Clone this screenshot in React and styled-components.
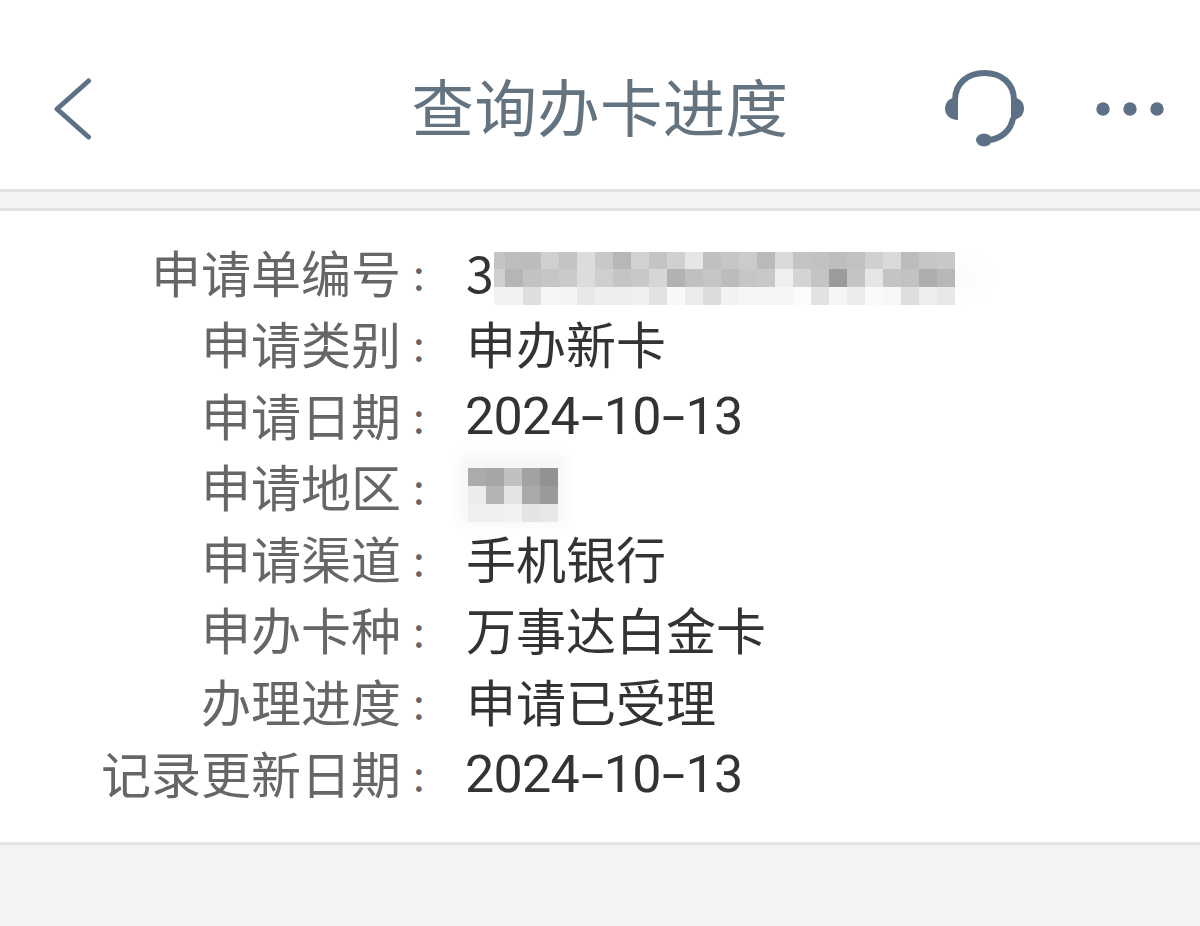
import React from 'react';
import styled, { createGlobalStyle } from 'styled-components';

const GlobalStyle = createGlobalStyle`
  html, body {
    margin: 0;
    padding: 0;
    background: #f3f3f3;
  }
`;

const Page = styled.div`
  width: 1200px;
  height: 926px;
  overflow: hidden;
  background: #f3f3f3;
  font-family: "Noto Sans CJK SC", "Noto Sans", sans-serif;
`;

const Header = styled.header`
  box-sizing: border-box;
  height: 192px;
  padding: 29px 36px 0;
  background: #fff;
  border-bottom: 3px solid #e4e4e4;
  display: grid;
  grid-template-columns: 1fr auto 1fr;
  align-items: center;
`;

const Title = styled.h1`
  margin: 0;
  padding-bottom: 7px;
  font-size: 62.5px;
  font-weight: 400;
  letter-spacing: 0.3px;
  line-height: 1;
  color: #63737f;
`;

const LeftSlot = styled.div`
  display: flex;
  align-items: center;
  padding-left: 18px;
`;

const RightSlot = styled.div`
  display: flex;
  align-items: center;
  justify-content: flex-end;
  gap: 71px;
`;

const Panel = styled.section`
  box-sizing: border-box;
  height: 637px;
  margin-top: 16px;
  padding-top: 24.5px;
  background: #fff;
  border-top: 3px solid #e4e4e4;
  border-bottom: 3px solid #e4e4e4;
`;

const Row = styled.div`
  display: grid;
  grid-template-columns: 401px 65px 1fr;
  grid-template-rows: 71.6px;
  align-items: center;
  font-size: 50px;
  line-height: 71.6px;
`;

const Label = styled.div`
  text-align: right;
  color: #666;
  white-space: nowrap;
`;

const Colon = styled.div`
  padding-left: 12px;
  font-size: 42px;
  color: #666;
`;

const Value = styled.div`
  display: flex;
  align-items: center;
  color: #333;
  white-space: nowrap;
`;

const DateText = styled.span`
  margin: 6px 0 0 -1px;
  font-family: Roboto, "Noto Sans", sans-serif;
  font-size: 52px;
  line-height: 60px;
  letter-spacing: -0.7px;
`;

const Dash = styled.span`
  display: inline-block;
  margin: 0 5.5px;
  transform: scaleX(1.6);
`;

const Mosaic = styled.div`
  display: grid;
  grid-template-columns: ${props => props.$columns};
  grid-auto-rows: ${props => props.$h}px;
  margin: ${props => props.$top}px 0 0 ${props => props.$left}px;
  box-shadow: ${props => props.$halo};
`;

const Cell = styled.div`
  background: ${props => props.$c};
`;

const numberCells = [
  '#c4c4c4', '#bdbdbd', '#bcbcbc', '#cfcfcf', '#c3c3c3', '#dcdcdc', '#c8c8c8', '#b7b7b7', '#d2d2d2', '#c4c4c4', '#d0d0d0', '#e6e6e6', '#c0c0c0', '#c6c6c6', '#cbcbcb', '#b9b9b9', '#dadada', '#c4c4c4', '#c2c2c2', '#bebebe', '#c2c2c2', '#d0d0d0', '#dadada', '#bcbcbc', '#c6c6c6', '#c8c8c8',
  '#cfcfcf', '#b5b5b5', '#c2c2c2', '#c6c6c6', '#cacaca', '#dcdcdc', '#cfcfcf', '#c4c4c4', '#c8c8c8', '#d6d6d6', '#b2b2b2', '#c0c0c0', '#c6c6c6', '#bcbcbc', '#c6c6c6', '#c8c8c8', '#f0f0f0', '#d4d4d4', '#c4c4c4', '#9b9b9b', '#c4c4c4', '#e6e6e6', '#c4c4c4', '#c2c2c2', '#adadad', '#b8b8b8',
  '#f2f2f2', '#f2f2f2', '#dedede', '#f6f6f6', '#f4f4f4', '#e8e8e8', '#eeeeee', '#eeeeee', '#f0f0f0', '#e2e2e2', '#f8f8f8', '#ececec', '#dcdcdc', '#f2f2f2', '#f6f6f6', '#f6f6f6', '#f6f6f6', '#fbfbfb', '#e2e2e2', '#f6f6f6', '#ececec', '#fafafa', '#f8f8f8', '#dedede', '#eeeeee', '#e8e8e8',
];

const regionCells = [
  '#ababab', '#a6a6a6', '#c0c0c0', '#a2a2a2', '#929292',
  '#ececec', '#b4b4b4', '#e4e4e4', '#a9a9a9', '#9a9a9a',
  '#f0f0f0', '#f0f0f0', '#f2f2f2', '#e4e4e4', '#e8e8e8',
];

const numberBlur = {
  cells: numberCells,
  columns: '11px repeat(25, 18px)',
  h: 17.8,
  top: 14,
  left: 0,
  halo: '44px 0 30px -14px #fafafa',
};

const regionBlur = {
  cells: regionCells,
  columns: 'repeat(5, 18px)',
  h: 18,
  top: 17,
  left: 2,
  halo: '0 -6px 14px 8px #f6f6f6',
};

const BlurBlock = ({ blur }) => (
  <Mosaic $columns={blur.columns} $h={blur.h} $top={blur.top} $left={blur.left} $halo={blur.halo}>
    {blur.cells.map((c, i) => <Cell key={i} $c={c} />)}
  </Mosaic>
);

// the hyphens are much wider than the digit font draws them
const DateValue = ({ date }) => {
  const [y, m, d] = date.split('-');
  return <DateText>{y}<Dash>-</Dash>{m}<Dash>-</Dash>{d}</DateText>;
};

const rows = [
  { label: '申请单编号', value: '3', blur: numberBlur },
  { label: '申请类别', value: '申办新卡' },
  { label: '申请日期', date: '2024-10-13' },
  { label: '申请地区', blur: regionBlur },
  { label: '申请渠道', value: '手机银行' },
  { label: '申办卡种', value: '万事达白金卡' },
  { label: '办理进度', value: '申请已受理' },
  { label: '记录更新日期', date: '2024-10-13' },
];

const BackIcon = () => (
  <svg width="40" height="64" viewBox="0 0 40 64" fill="none">
    <path d="M34.5 4 L3 32 L34.5 60" stroke="#5c7185" strokeWidth="5" strokeLinecap="round" strokeLinejoin="round" />
  </svg>
);

const HeadsetIcon = () => (
  <svg width="80" height="78" viewBox="0 0 80 78" fill="none">
    <path d="M10 30 C10 13 23 3 39.5 3 C56 3 69 13 69 30" stroke="#5c7185" strokeWidth="6" />
    <path d="M68 48 C66 61 56 68 45 70" stroke="#5c7185" strokeWidth="6" />
    <path d="M13 27 V50 C5 50 0 45 0 38.5 C0 32 5 27 13 27 Z" fill="#5c7185" />
    <path d="M66 27 C74 27 79 32 79 38.5 C79 45 74 50 66 50 Z" fill="#5c7185" />
    <ellipse cx="39" cy="70" rx="8" ry="6.5" fill="#5c7185" />
  </svg>
);

const MoreIcon = () => (
  <svg width="68" height="14" viewBox="0 0 68 14" fill="#5c7185">
    <circle cx="7" cy="7" r="6.7" />
    <circle cx="34" cy="7" r="6.7" />
    <circle cx="61" cy="7" r="6.7" />
  </svg>
);

const App = () => (
  <Page>
    <GlobalStyle />
    <Header>
      <LeftSlot>
        <BackIcon />
      </LeftSlot>
      <Title>查询办卡进度</Title>
      <RightSlot>
        <HeadsetIcon />
        <MoreIcon />
      </RightSlot>
    </Header>
    <Panel>
      {rows.map(row => (
        <Row key={row.label}>
          <Label>{row.label}</Label>
          <Colon>:</Colon>
          <Value>
            {row.value}
            {row.date && <DateValue date={row.date} />}
            {row.blur && <BlurBlock blur={row.blur} />}
          </Value>
        </Row>
      ))}
    </Panel>
  </Page>
);

export default App;
